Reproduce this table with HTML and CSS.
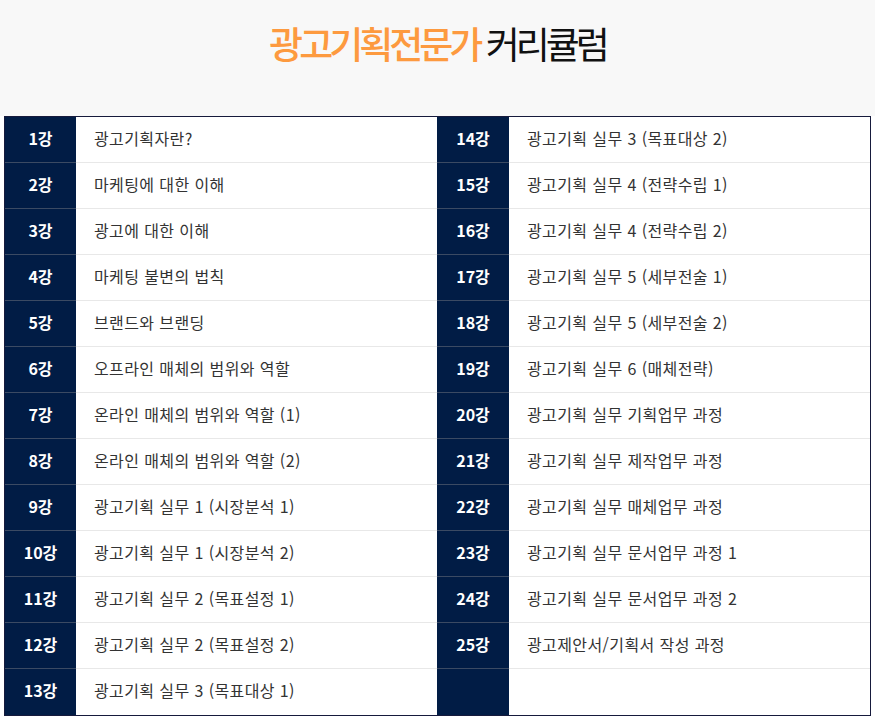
FILE: index.html
```html
<!DOCTYPE html>
<html lang="ko">
<head>
<meta charset="utf-8">
<link rel="stylesheet" href="styles.css">
</head>
<body>
<div class="page">
  <header class="head">
    <h1 class="title"><span class="hl">광고기획전문가</span> 커리큘럼</h1>
  </header>
  <div class="table">
    <div class="col">
      <div class="row"><div class="no">1강</div><div class="txt">광고기획자란?</div></div>
      <div class="row"><div class="no">2강</div><div class="txt">마케팅에 대한 이해</div></div>
      <div class="row"><div class="no">3강</div><div class="txt">광고에 대한 이해</div></div>
      <div class="row"><div class="no">4강</div><div class="txt">마케팅 불변의 법칙</div></div>
      <div class="row"><div class="no">5강</div><div class="txt">브랜드와 브랜딩</div></div>
      <div class="row"><div class="no">6강</div><div class="txt">오프라인 매체의 범위와 역할</div></div>
      <div class="row"><div class="no">7강</div><div class="txt">온라인 매체의 범위와 역할 (1)</div></div>
      <div class="row"><div class="no">8강</div><div class="txt">온라인 매체의 범위와 역할 (2)</div></div>
      <div class="row"><div class="no">9강</div><div class="txt">광고기획 실무 1 (시장분석 1)</div></div>
      <div class="row"><div class="no">10강</div><div class="txt">광고기획 실무 1 (시장분석 2)</div></div>
      <div class="row"><div class="no">11강</div><div class="txt">광고기획 실무 2 (목표설정 1)</div></div>
      <div class="row"><div class="no">12강</div><div class="txt">광고기획 실무 2 (목표설정 2)</div></div>
      <div class="row"><div class="no">13강</div><div class="txt">광고기획 실무 3 (목표대상 1)</div></div>
    </div>
    <div class="col">
      <div class="row"><div class="no">14강</div><div class="txt">광고기획 실무 3 (목표대상 2)</div></div>
      <div class="row"><div class="no">15강</div><div class="txt">광고기획 실무 4 (전략수립 1)</div></div>
      <div class="row"><div class="no">16강</div><div class="txt">광고기획 실무 4 (전략수립 2)</div></div>
      <div class="row"><div class="no">17강</div><div class="txt">광고기획 실무 5 (세부전술 1)</div></div>
      <div class="row"><div class="no">18강</div><div class="txt">광고기획 실무 5 (세부전술 2)</div></div>
      <div class="row"><div class="no">19강</div><div class="txt">광고기획 실무 6 (매체전략)</div></div>
      <div class="row"><div class="no">20강</div><div class="txt">광고기획 실무 기획업무 과정</div></div>
      <div class="row"><div class="no">21강</div><div class="txt">광고기획 실무 제작업무 과정</div></div>
      <div class="row"><div class="no">22강</div><div class="txt">광고기획 실무 매체업무 과정</div></div>
      <div class="row"><div class="no">23강</div><div class="txt">광고기획 실무 문서업무 과정 1</div></div>
      <div class="row"><div class="no">24강</div><div class="txt">광고기획 실무 문서업무 과정 2</div></div>
      <div class="row"><div class="no">25강</div><div class="txt">광고제안서/기획서 작성 과정</div></div>
      <div class="row"><div class="no"></div><div class="txt"></div></div>
    </div>
  </div>
</div>
</body>
</html>
```

FILE: styles.css
```css
html, body {
  margin: 0;
  padding: 0;
  background: #ffffff;
}
body {
  font-family: "Noto Sans CJK KR", "Noto Sans", sans-serif;
  color: #333333;
}
.page {
  width: 875px;
}
.head {
  background: #f8f8f8;
  height: 116px;
  display: flex;
  justify-content: center;
}
.title {
  margin: 0;
  padding-top: 17px;
  padding-left: 0;
  font-size: 37px;
  line-height: 52px;
  font-weight: 400;
  letter-spacing: -4px;
  color: #111111;
}
.hl {
  color: #fd9a3f;
  font-weight: 500;
}
.table {
  margin-left: 4px;
  width: 865px;
  border: 1px solid #161a3c;
  display: grid;
  grid-template-columns: 432px 433px;
  background: #ffffff;
}
.col {
  display: flex;
  flex-direction: column;
}
.row {
  display: grid;
  grid-template-columns: 71px 1fr;
  height: 46px;
}
.col + .col .row {
  grid-template-columns: 72px 1fr;
}
.no {
  background: #011c45;
  color: #ffffff;
  font-weight: 700;
  font-size: 16px;
  display: flex;
  align-items: center;
  justify-content: center;
  padding-bottom: 4px;
  border-bottom: 1px solid #3b4a63;
}
.txt {
  display: flex;
  align-items: center;
  padding-left: 18px;
  padding-bottom: 4px;
  font-size: 16px;
  color: #333333;
  border-bottom: 1px solid #e8e8e8;
  letter-spacing: 0.4px;
}
.row:last-child .no,
.row:last-child .txt {
  border-bottom: 0;
}
```
